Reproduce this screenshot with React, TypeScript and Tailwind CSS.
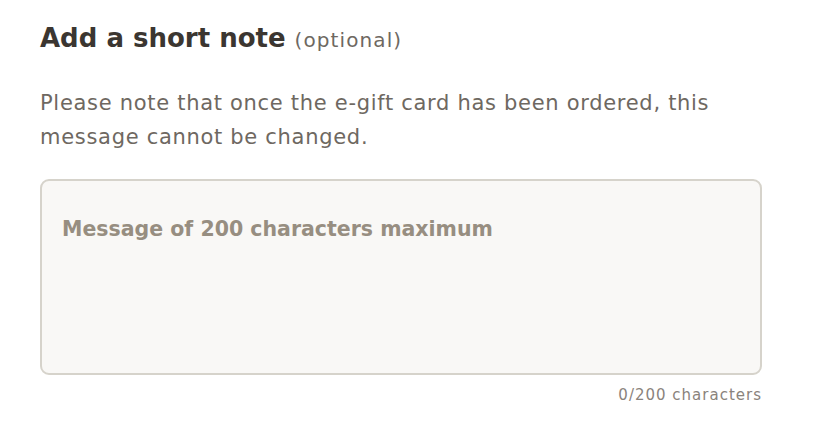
import React, { useState } from 'react';

const App = () => {
    const [note, setNote] = useState('');

    return (
        <div className="w-[832px] h-[430px] bg-white font-['DejaVu_Sans',sans-serif]">
            <div className="w-[722px] ml-10 pt-[20px]">
                <h2 className="flex items-baseline gap-[9px] leading-[36px]">
                    <span className="text-[26px] font-bold text-[#3b3631]">Add a short note</span>
                    <span className="text-[20px] tracking-[1.1px] text-[#6e6861]">(optional)</span>
                </h2>

                <p className="mt-[28px] text-[21px] tracking-[0.7px] leading-[34px] text-[#6e6861]">
                    Please note that once the e-gift card has been ordered, this
                    <br />
                    message cannot be changed.
                </p>

                <textarea
                    value={note}
                    maxLength={200}
                    onChange={(e) => setNote(e.target.value)}
                    placeholder="Message of 200 characters maximum"
                    className="block mt-[25px] w-full h-[196px] resize-none rounded-[9px] border-2 border-[#d6d3cb] bg-[#f9f8f6] px-5 pt-[33px] text-[20.5px] font-bold text-[#3b3631] placeholder:text-[#978e81] outline-none"
                />

                <div className="mt-[9px] text-right text-[15px] tracking-[1px] text-[#8a837c]">
                    {note.length}/200 characters
                </div>
            </div>
        </div>
    );
};

export default App;
